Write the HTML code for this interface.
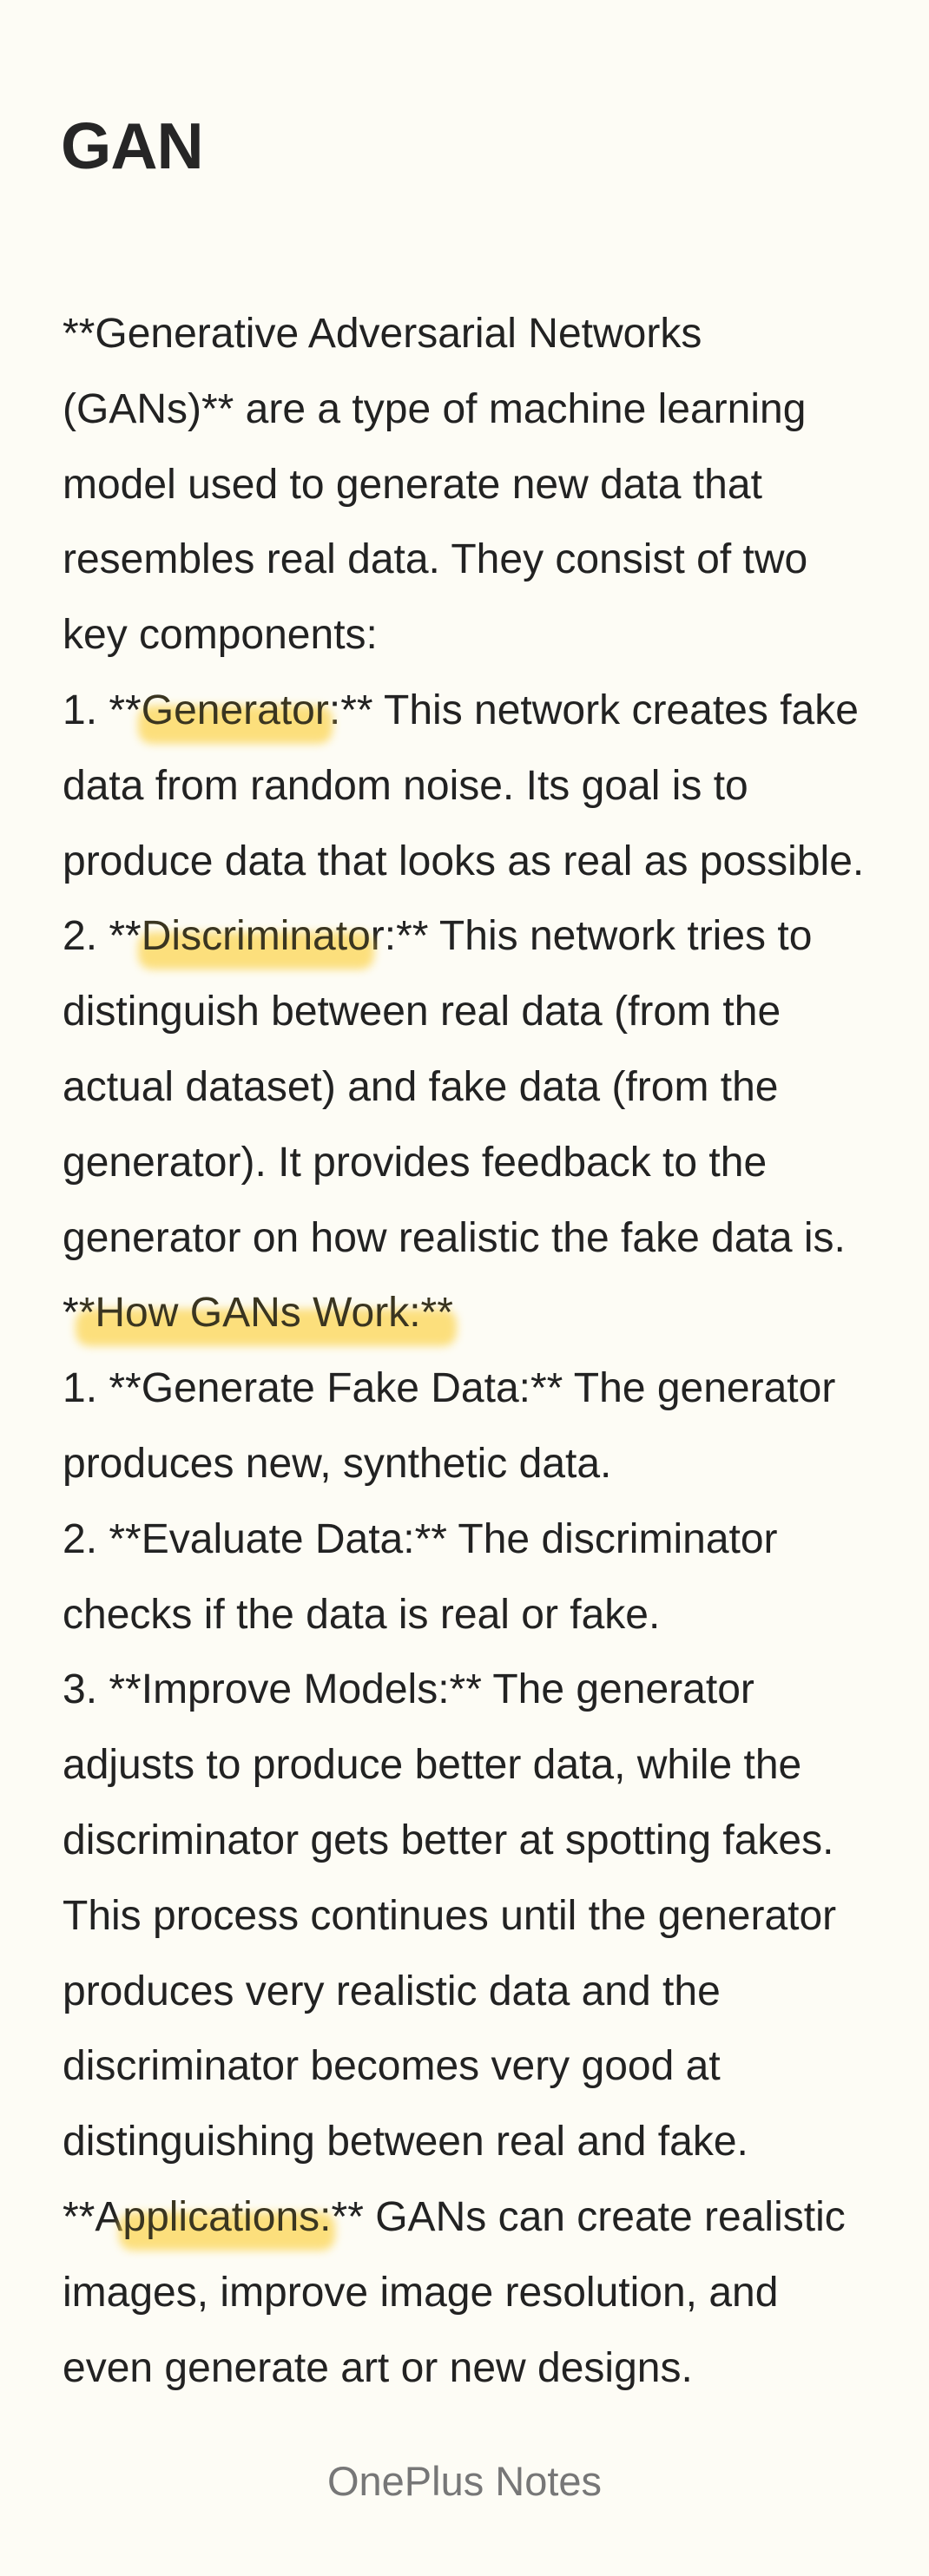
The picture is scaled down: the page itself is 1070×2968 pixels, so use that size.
<!DOCTYPE html>
<html><head><meta charset="utf-8"><style>
html,body{margin:0;padding:0;background:#fdfcf5;}
body{width:1070px;height:2968px;position:relative;overflow:hidden;font-family:"Liberation Sans",sans-serif;color:#222;}
h1{position:absolute;left:70px;top:118px;margin:0;font-size:75px;font-weight:bold;line-height:100px;color:#262626;letter-spacing:-1px;}
.body{position:absolute;left:72px;top:342px;font-size:48px;line-height:86.8px;letter-spacing:0;}
.body div{white-space:nowrap;height:86.8px;}
.hl{position:relative;z-index:0;color:#3a3520;}
.hl::before{content:"";position:absolute;left:-4px;right:-4px;top:40%;bottom:-22%;background:#fcd34a;border-radius:16px;filter:blur(5px);z-index:-1;opacity:.7;}
.foot{position:absolute;left:0;width:1070px;top:2830px;text-align:center;font-size:47px;line-height:58px;color:#777;}
</style></head><body>
<h1>GAN</h1>
<div class="body">
<div>**Generative Adversarial Networks</div>
<div>(GANs)** are a type of machine learning</div>
<div>model used to generate new data that</div>
<div>resembles real data. They consist of two</div>
<div>key components:</div>
<div>1. **<span class="hl">Generator</span>:** This network creates fake</div>
<div>data from random noise. Its goal is to</div>
<div>produce data that looks as real as possible.</div>
<div>2. **<span class="hl">Discriminato</span>r:** This network tries to</div>
<div>distinguish between real data (from the</div>
<div>actual dataset) and fake data (from the</div>
<div>generator). It provides feedback to the</div>
<div>generator on how realistic the fake data is.</div>
<div>*<span class="hl">*How GANs Work:**</span></div>
<div>1. **Generate Fake Data:** The generator</div>
<div>produces new, synthetic data.</div>
<div>2. **Evaluate Data:** The discriminator</div>
<div>checks if the data is real or fake.</div>
<div>3. **Improve Models:** The generator</div>
<div>adjusts to produce better data, while the</div>
<div>discriminator gets better at spotting fakes.</div>
<div>This process continues until the generator</div>
<div>produces very realistic data and the</div>
<div>discriminator becomes very good at</div>
<div>distinguishing between real and fake.</div>
<div>**A<span class="hl">pplications:</span>** GANs can create realistic</div>
<div>images, improve image resolution, and</div>
<div>even generate art or new designs.</div>
</div>
<div class="foot">OnePlus Notes</div>
</body></html>
